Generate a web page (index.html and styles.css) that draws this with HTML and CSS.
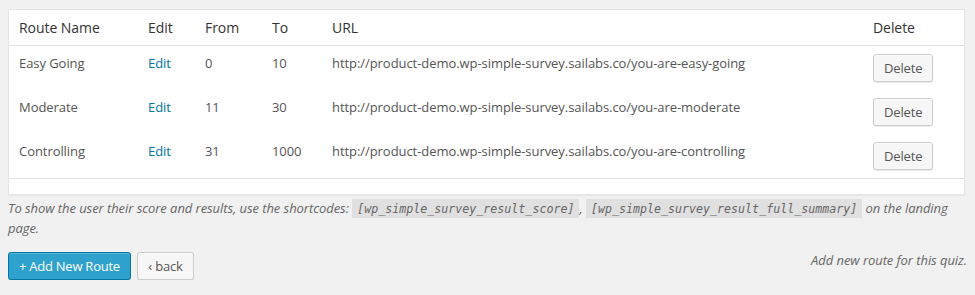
FILE: index.html
```html
<!DOCTYPE html>
<html lang="en">
<head>
    <meta charset="UTF-8">
    <title>Routes</title>
    <link rel="stylesheet" href="styles.css">
</head>
<body>

<div class="wrap">
    <table class="routes">
        <thead>
            <tr>
                <th class="col-name">Route Name</th>
                <th class="col-edit">Edit</th>
                <th class="col-from">From</th>
                <th class="col-to">To</th>
                <th class="col-url">URL</th>
                <th class="col-delete">Delete</th>
            </tr>
        </thead>
        <tbody>
            <tr>
                <td>Easy Going</td>
                <td><a href="#">Edit</a></td>
                <td>0</td>
                <td>10</td>
                <td>http://product-demo.wp-simple-survey.sailabs.co/you-are-easy-going</td>
                <td><button class="button">Delete</button></td>
            </tr>
            <tr>
                <td>Moderate</td>
                <td><a href="#">Edit</a></td>
                <td>11</td>
                <td>30</td>
                <td>http://product-demo.wp-simple-survey.sailabs.co/you-are-moderate</td>
                <td><button class="button">Delete</button></td>
            </tr>
            <tr>
                <td>Controlling</td>
                <td><a href="#">Edit</a></td>
                <td>31</td>
                <td>1000</td>
                <td>http://product-demo.wp-simple-survey.sailabs.co/you-are-controlling</td>
                <td><button class="button">Delete</button></td>
            </tr>
        </tbody>
        <tfoot>
            <tr><td colspan="6"></td></tr>
        </tfoot>
    </table>

    <p class="description">To show the user their score and results, use the shortcodes: <code>[wp_simple_survey_result_score]</code>, <code>[wp_simple_survey_result_full_summary]</code> on the landing page.</p>

    <div class="actions">
        <span class="hint">Add new route for this quiz.</span>
        <button class="button button-primary">+ Add New Route</button>
        <button class="button">&lsaquo; back</button>
    </div>
</div>

</body>
</html>
```

FILE: styles.css
```css
/* General */
body {
    background-color: #f1f1f1;
    color: #444;
    font-family: "Open Sans", sans-serif;
    font-size: 13px;
    letter-spacing: -0.06px;
    margin: 0;
}

.wrap {
    padding: 9px 10px 0 8px;
}

a {
    color: #0074a2;
    text-decoration: none;
}

/* Routes table */
.routes {
    width: 100%;
    background-color: #fff;
    border: 1px solid #e5e5e5;
    box-shadow: 0 1px 1px rgba(0, 0, 0, 0.04);
    border-spacing: 0;
    table-layout: fixed;
}

.routes th {
    text-align: left;
    font-weight: normal;
    font-size: 14px;
    color: #333;
    height: 35px;
    padding: 0 10px;
    border-bottom: 1px solid #e1e1e1;
}

.routes td {
    color: #555;
    vertical-align: top;
    line-height: 19px;
    padding: 8px 10px;
    height: 28px;
}

.routes tfoot td {
    height: 15px;
    padding: 0;
    border-top: 1px solid #e1e1e1;
}

.col-name { width: 109px; }
.col-edit { width: 37px; }
.col-from { width: 47px; }
.col-to { width: 40px; }
.col-delete { width: 81px; }

/* Buttons */
.button {
    display: inline-block;
    height: 28px;
    margin: 0;
    padding: 0 10px 1px;
    font-family: "Open Sans", sans-serif;
    font-size: 13px;
    letter-spacing: -0.15px;
    line-height: 26px;
    color: #555;
    background: #f7f7f7;
    border: 1px solid #ccc;
    border-radius: 3px;
    box-shadow: inset 0 1px 0 #fff, 0 1px 0 rgba(0, 0, 0, 0.08);
    cursor: pointer;
    vertical-align: top;
}

.button-primary {
    background: #2ea2cc;
    border-color: #0074a2;
    color: #fff;
    letter-spacing: -0.25px;
    box-shadow: inset 0 1px 0 rgba(120, 200, 230, 0.5), 0 1px 0 rgba(0, 0, 0, 0.15);
}

/* Description */
.description {
    font-style: italic;
    color: #666;
    line-height: 19px;
    margin: 4px 0 0;
}

.description code {
    font-family: "DejaVu Sans Mono", monospace;
    font-size: 11.65px;
    letter-spacing: 0;
    background: rgba(0, 0, 0, 0.07);
    padding: 3px 5px 2px;
}

/* Actions */
.actions {
    margin-top: 14px;
}

.actions .button + .button {
    margin-left: 3px;
}

.hint {
    float: right;
    font-style: italic;
    color: #666;
    line-height: 19px;
    margin-top: -1px;
    margin-right: -2px;
}
```
